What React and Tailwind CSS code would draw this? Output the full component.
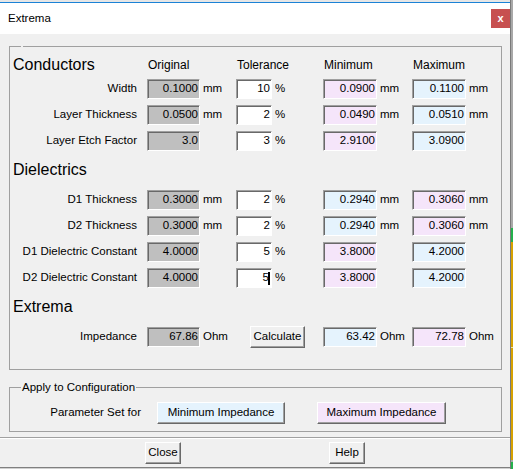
const GRAY = 'bg-[#bfbfbf]';
const PINK = 'bg-[#f5e5fa]';
const BLUE = 'bg-[#e5f3fd]';

function Field({ value, bg, w, cursor }) {
  return (
    <div
      className={`${w} h-[20px] flex items-center justify-end pr-[1px] border border-t-[#a0a0a0] border-l-[#a0a0a0] border-b-white border-r-white shadow-[inset_1px_1px_0_#696969] ${bg}`}
    >
      <span>{value}</span>
      {cursor && <span className="w-[2px] h-[13px] bg-black -ml-[1px]" />}
    </div>
  );
}

function Button({ children, w, bg = 'bg-[#f0f0f0]' }) {
  return (
    <button
      className={`${w} h-[22px] flex items-center justify-center border border-t-white border-l-white border-b-[#696969] border-r-[#696969] shadow-[inset_-1px_-1px_0_#a0a0a0] ${bg}`}
    >
      {children}
    </button>
  );
}

function Row({ label, orig, unit, tol, min, max, minBg, maxBg, cursor, className = '' }) {
  return (
    <div className={`flex items-center h-[20px] ${className}`}>
      <div className="w-[137px] pr-[10px] text-right">{label}</div>
      <Field value={orig} bg={GRAY} w="w-[53px]" />
      <div className="w-[36px] pl-[3px]">{unit}</div>
      <Field value={tol} bg="bg-white" w="w-[36px]" cursor={cursor} />
      <div className="w-[51px] pl-[3px]">%</div>
      <Field value={min} bg={minBg} w="w-[54px]" />
      <div className="w-[35px] pl-[3px]">{unit}</div>
      <Field value={max} bg={maxBg} w="w-[54px]" />
      <div className="pl-[3px]">{unit}</div>
    </div>
  );
}

function Heading({ children, className = '' }) {
  return (
    <div className={`h-[20px] flex items-center pl-[3px] text-[16px] ${className}`}>{children}</div>
  );
}

export default function App() {
  return (
    <div className="w-[513px] h-[469px] flex overflow-hidden font-['Liberation_Sans',Arial,sans-serif] text-[11.5px] text-black leading-none">
      {/* dialog window */}
      <div className="w-[511px] flex flex-col border-r border-[#7a7a7a]">
        <div className="h-[2px] bg-[#e6e6e6]" />
        <div className="h-[1px] bg-[#1b82d6]" />

        {/* title bar */}
        <div className="h-[31px] bg-white flex items-center pl-[8px]">
          <span className="text-[11.5px]">Extrema</span>
          <div className="ml-auto w-[19px] h-[19px] bg-[#c75050] flex items-center justify-center text-white text-[11px] font-bold">
            x
          </div>
        </div>

        {/* body */}
        <div className="h-[433px] bg-[#f0f0f0] flex flex-col">
          <fieldset className="ml-[9px] mt-[12px] w-[493px] min-w-0 border border-[#a0a0a0] pt-[8px] pb-[22px]">
            <legend className="ml-[11px] px-[1px] h-0" />

            <div className="flex items-center h-[20px]">
              <div className="w-[137px] pl-[3px] text-[16px]">Conductors</div>
              <div className="w-[89px] pl-[1px] text-[12px]">Original</div>
              <div className="w-[87px] pl-[1px] text-[12px]">Tolerance</div>
              <div className="w-[89px] pl-[1px] text-[12px]">Minimum</div>
              <div className="pl-[1px] text-[12px]">Maximum</div>
            </div>

            <div className="mt-[4px] flex flex-col gap-[6px]">
              <Row label="Width" orig="0.1000" unit="mm" tol="10" min="0.0900" max="0.1100" minBg={PINK} maxBg={BLUE} />
              <Row label="Layer Thickness" orig="0.0500" unit="mm" tol="2" min="0.0490" max="0.0510" minBg={PINK} maxBg={BLUE} />
              <Row label="Layer Etch Factor" orig="3.0" unit="" tol="3" min="2.9100" max="3.0900" minBg={PINK} maxBg={BLUE} />
            </div>

            <Heading className="mt-[9px]">Dielectrics</Heading>

            <div className="mt-[10px] flex flex-col gap-[6px]">
              <Row label="D1 Thickness" orig="0.3000" unit="mm" tol="2" min="0.2940" max="0.3060" minBg={BLUE} maxBg={PINK} />
              <Row label="D2 Thickness" orig="0.3000" unit="mm" tol="2" min="0.2940" max="0.3060" minBg={BLUE} maxBg={PINK} />
              <Row label="D1 Dielectric Constant" orig="4.0000" unit="" tol="5" min="3.8000" max="4.2000" minBg={PINK} maxBg={BLUE} />
              <Row label="D2 Dielectric Constant" orig="4.0000" unit="" tol="5" min="3.8000" max="4.2000" minBg={PINK} maxBg={BLUE} cursor />
            </div>

            <Heading className="mt-[9px]">Extrema</Heading>

            <div className="mt-[10px] flex items-center h-[20px]">
              <div className="w-[137px] pr-[10px] text-right">Impedance</div>
              <Field value="67.86" bg={GRAY} w="w-[53px]" />
              <div className="w-[50px] pl-[3px]">Ohm</div>
              <Button w="w-[55px]">Calculate</Button>
              <div className="w-[18px]" />
              <Field value="63.42" bg={BLUE} w="w-[54px]" />
              <div className="w-[35px] pl-[3px]">Ohm</div>
              <Field value="72.78" bg={PINK} w="w-[54px]" />
              <div className="pl-[3px]">Ohm</div>
            </div>
          </fieldset>

          <fieldset className="ml-[9px] mt-[10px] w-[493px] min-w-0 border border-[#a0a0a0] pt-[8px] pb-[7px]">
            <legend className="ml-[11px] px-[1px] leading-[14px]">Apply to Configuration</legend>
            <div className="flex items-center h-[22px]">
              <div className="w-[131px] text-right">Parameter Set for</div>
              <div className="w-[16px]" />
              <Button w="w-[128px]" bg={BLUE}>Minimum Impedance</Button>
              <div className="w-[32px]" />
              <Button w="w-[129px]" bg={PINK}>Maximum Impedance</Button>
            </div>
          </fieldset>

          <div className="mt-[5px] h-[1px] bg-[#a0a0a0]" />
          <div className="h-[1px] bg-white" />

          <div className="mt-[3px] flex items-center pl-[145px]">
            <Button w="w-[36px]">Close</Button>
            <div className="w-[148px]" />
            <Button w="w-[36px]">Help</Button>
          </div>
        </div>

        <div className="h-[1px] bg-[#808080]" />
        <div className="h-[1px] bg-[#d0d0d0]" />
      </div>

      {/* background window peeking at the right */}
      <div className="flex-1 flex flex-col">
        <div className="h-[228px] bg-[#a8a8a8]" />
        <div className="h-[14px] bg-[#22b14c]" />
        <div className="h-[105px] bg-[#d6a100]" />
        <div className="h-[1px] bg-[#f0e0a0]" />
        <div className="h-[112px] bg-[#d6a100]" />
        <div className="h-[2px] bg-[#a8a8a8]" />
        <div className="flex-1 bg-[#22b14c]" />
      </div>
    </div>
  );
}
